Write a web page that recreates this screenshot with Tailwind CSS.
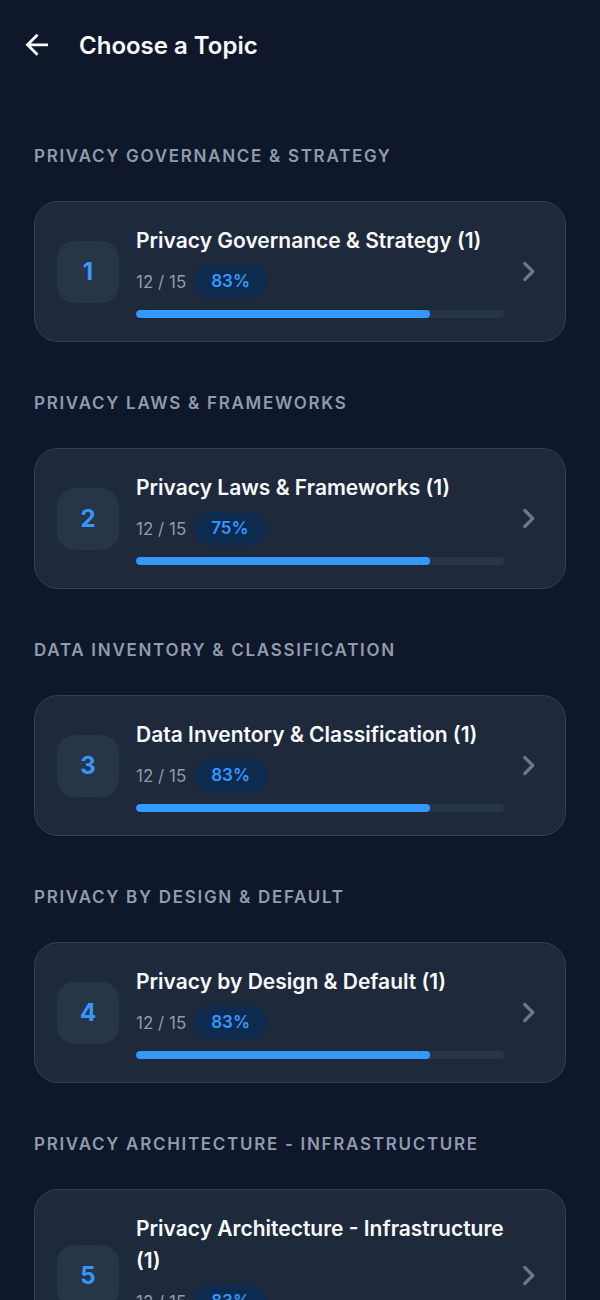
<!DOCTYPE html>
<html lang="en">
<head>
  <meta charset="UTF-8">
  <meta name="viewport" content="width=device-width, initial-scale=1.0">
  <title>Choose a Topic</title>
  <script src="https://cdn.jsdelivr.net/npm/@tailwindcss/browser@4"></script>
</head>
<body class="bg-[#0f172a] text-slate-50 h-screen overflow-hidden flex flex-col font-['Inter',sans-serif]">

  <!-- Top bar -->
  <header class="shrink-0 flex items-center gap-[25px] h-[90px] px-5">
    <button type="button" aria-label="Back" class="size-[34px] flex items-center justify-center">
      <svg class="size-[34px]" viewBox="0 0 34 34" fill="none" stroke="currentColor" stroke-width="2.8">
        <path d="M28 16.800H8M17.500 6.800L7.500 16.800l10 10" />
      </svg>
    </button>
    <h1 class="pt-px text-2xl font-semibold">Choose a Topic</h1>
  </header>

  <!-- Topic list -->
  <main id="topics" class="flex-1 min-h-0 overflow-y-auto [scrollbar-width:none] px-[34px] pt-[54px] pb-12 flex flex-col gap-[49px]"></main>

  <template id="topicTemplate">
    <section class="shrink-0">
      <h2 class="mb-[33px] text-[17px] leading-6 font-semibold tracking-widest uppercase text-[#909bae]"></h2>
      <a href="#" class="flex items-center rounded-3xl border border-[#334155] bg-[#1e293b] pl-[22px] pr-[23px] py-[23px]">
        <span data-number class="shrink-0 size-[62px] rounded-[18px] bg-[#273548] flex items-center justify-center text-2xl font-bold text-[#3399ff]"></span>
        <div class="flex-1 min-w-0 ml-[17px] mr-[10px]">
          <h3 class="text-[21px] leading-8 font-semibold"></h3>
          <div class="mt-2 flex items-center gap-2">
            <span data-count class="text-[17px] leading-6 text-[#909bae]"></span>
            <span data-score class="h-[33px] px-[17px] rounded-full bg-[#0d2b4e] flex items-center text-[17px] font-semibold text-[#3399ff]"></span>
          </div>
          <div class="mt-3 h-2 rounded-full bg-[#273548] overflow-hidden">
            <div data-bar class="h-full rounded-full bg-[#3399ff]"></div>
          </div>
        </div>
        <svg class="shrink-0 size-7" viewBox="0 0 28 28" fill="none" stroke="#6b788c" stroke-width="3.2" stroke-linecap="round" stroke-linejoin="round">
          <path d="M10.800 5.500l8 8-8 8" />
        </svg>
      </a>
    </section>
  </template>

  <script>
    const topics = [
      { name: 'Privacy Governance & Strategy', done: 12, total: 15, score: 83 },
      { name: 'Privacy Laws & Frameworks', done: 12, total: 15, score: 75 },
      { name: 'Data Inventory & Classification', done: 12, total: 15, score: 83 },
      { name: 'Privacy by Design & Default', done: 12, total: 15, score: 83 },
      { name: 'Privacy Architecture - Infrastructure', done: 12, total: 15, score: 83 },
    ];

    const list = document.getElementById('topics');
    const template = document.getElementById('topicTemplate');

    topics.forEach((topic, i) => {
      const item = template.content.cloneNode(true);
      item.querySelector('h2').textContent = topic.name;
      item.querySelector('[data-number]').textContent = i + 1;
      item.querySelector('h3').textContent = topic.name + ' (1)';
      item.querySelector('[data-count]').textContent = topic.done + ' / ' + topic.total;
      item.querySelector('[data-score]').textContent = topic.score + '%';
      item.querySelector('[data-bar]').style.width = (topic.done / topic.total * 100) + '%';
      list.appendChild(item);
    });
  </script>
</body>
</html>
